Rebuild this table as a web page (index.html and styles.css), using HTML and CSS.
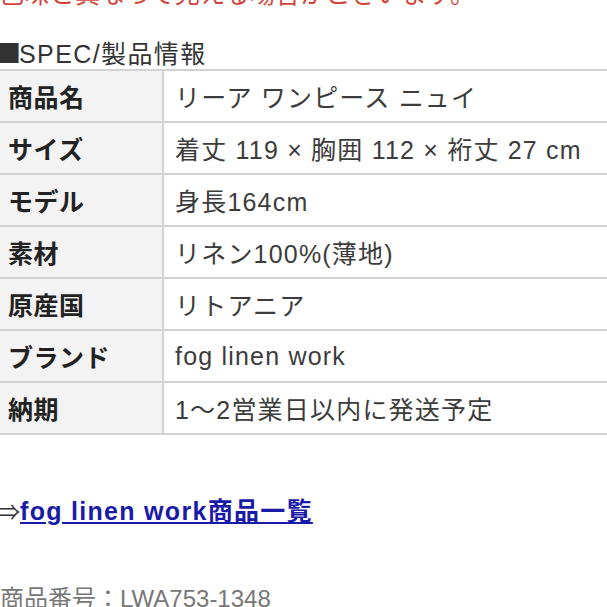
FILE: index.html
```html
<!DOCTYPE html>
<html lang="ja">
<head>
<meta charset="utf-8">
<link rel="stylesheet" href="styles.css">
</head>
<body>
<div class="page">
  <p class="note">色味と異なって見える場合がございます。</p>
  <h3 class="spec-title"><span class="square">■</span>SPEC/製品情報</h3>
  <table class="spec">
    <tr><th>商品名</th><td>リーア ワンピース ニュイ</td></tr>
    <tr><th>サイズ</th><td>着丈 119 × 胸囲 112 × 裄丈 27 cm</td></tr>
    <tr><th>モデル</th><td>身長164cm</td></tr>
    <tr><th>素材</th><td>リネン100%(薄地)</td></tr>
    <tr><th>原産国</th><td>リトアニア</td></tr>
    <tr><th>ブランド</th><td>fog linen work</td></tr>
    <tr><th>納期</th><td>1～2営業日以内に発送予定</td></tr>
  </table>
  <p class="more"><span class="arrow">⇒</span><a href="#">fog linen work商品一覧</a></p>
  <p class="code">商品番号：LWA753-1348</p>
</div>
</body>
</html>
```
FILE: styles.css
```css
html, body {
  margin: 0;
  padding: 0;
  background: #fff;
  overflow: hidden;
}
.page {
  font-family: "Liberation Sans", "Noto Sans CJK JP", sans-serif;
  color: #333;
  width: 640px;
  margin-left: -2px;
}
.note {
  margin: -21px 0 0 1px;
  font-size: 25px;
  line-height: 30px;
  letter-spacing: 0.3px;
  color: #d0453b;
  white-space: nowrap;
}
.spec-title {
  margin: 28px 0 0 0;
  font-size: 25px;
  font-weight: normal;
  line-height: 30px;
  letter-spacing: 1.4px;
  color: #333;
  white-space: nowrap;
}
.square {
  font-family: "Noto Sans CJK JP", sans-serif;
  font-size: 25px;
  letter-spacing: -2px;
  margin-left: -2px;
}
.spec {
  margin-top: 0;
  border-collapse: collapse;
  width: 640px;
}
.spec th, .spec td {
  border: 2px solid #d2d2d2;
  height: 52px;
  padding: 0 0 0 11px;
  font-size: 25px;
  letter-spacing: 1.2px;
  text-align: left;
  white-space: nowrap;
  vertical-align: middle;
  box-sizing: border-box;
}
.spec th {
  width: 164px;
  padding-left: 8px;
  background: #f3f3f3;
  color: #222;
  font-weight: bold;
  letter-spacing: 0.5px;
}
.spec td {
  background: #fff;
  color: #3c3c3c;
}
.more {
  margin: 61px 0 0 0;
  font-size: 25px;
  line-height: 30px;
  color: #333;
  white-space: nowrap;
}
.arrow {
  font-size: 22px;
}
.more a {
  color: #1a1aa8;
  text-decoration: underline;
  font-weight: bold;
  letter-spacing: 1.3px;
}
.code {
  margin: 56px 0 0 2px;
  font-size: 24px;
  line-height: 30px;
  color: #777;
  white-space: nowrap;
}
```
